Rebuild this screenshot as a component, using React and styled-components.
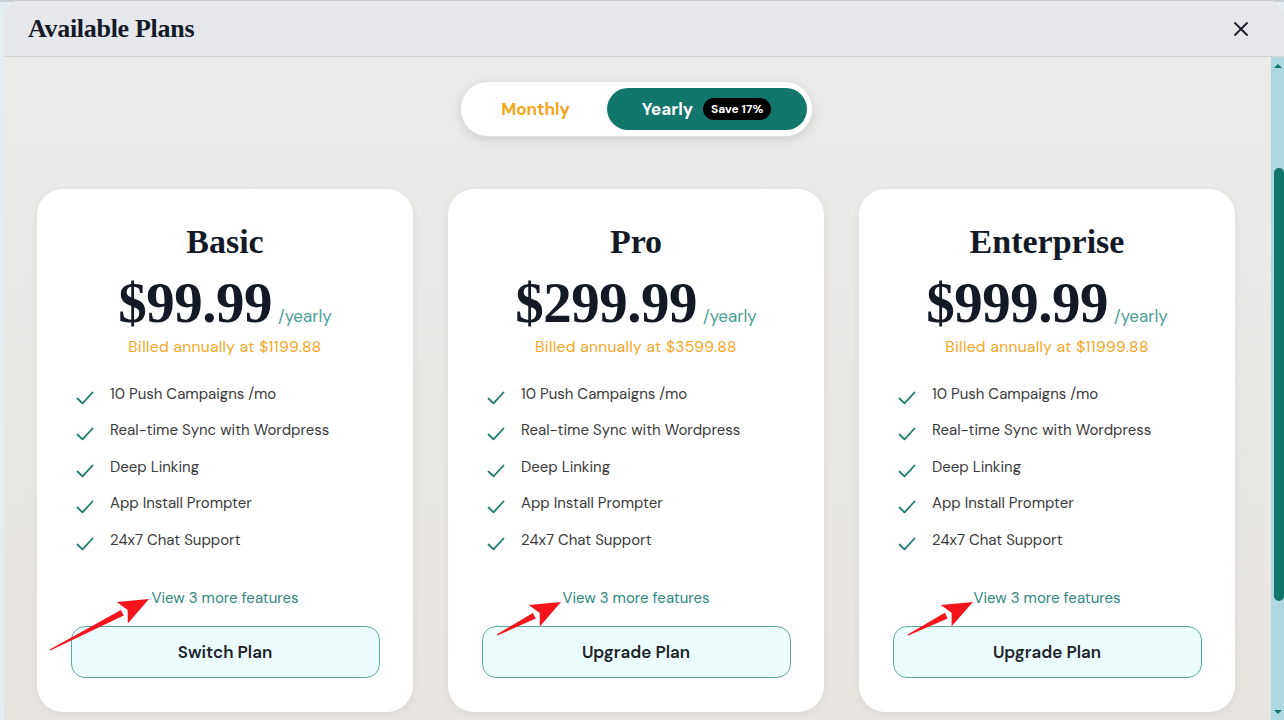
import React from 'react';
import styled, { createGlobalStyle } from 'styled-components';

const GlobalStyle = createGlobalStyle`
  html, body {
    margin: 0;
    padding: 0;
    height: 100%;
    overflow: hidden;
    background: #dfe8ec;
  }
  #root {
    height: 100%;
  }
`;

const Backdrop = styled.div`
  height: 720px;
  padding: 1px 0 0 4px;
  box-sizing: border-box;
  background: linear-gradient(#c9cdd1 0, #c9cdd1 2px, #e4eef2 2px);
`;

const Modal = styled.div`
  height: 719px;
  display: flex;
  flex-direction: column;
  background: #eae9e7;
  border-radius: 14px 14px 0 0;
  overflow: hidden;
`;

const Header = styled.div`
  height: 55px;
  flex: none;
  display: flex;
  align-items: center;
  justify-content: space-between;
  padding: 0 33px 0 24px;
  background: #e6e7eb;
  border-bottom: 1px solid #d3d3d3;
`;

const Title = styled.h2`
  margin: 0;
  font-family: 'Liberation Serif', serif;
  font-weight: 700;
  font-size: 26px;
  letter-spacing: -0.3px;
  color: #141a26;
`;

const CloseButton = styled.button`
  border: 0;
  background: none;
  padding: 0;
  width: 20px;
  height: 20px;
  display: flex;
  align-items: center;
  justify-content: center;
  cursor: pointer;
`;

const Body = styled.div`
  flex: 1;
  min-height: 0;
  display: flex;
  background: linear-gradient(#ebebe9, #e7e4e0);
`;

const ScrollArea = styled.div`
  flex: 1;
  overflow: hidden;
`;

const ScrollRail = styled.div`
  flex: none;
  width: 13px;
  background: #acd7e3;
  display: flex;
  flex-direction: column;
  align-items: center;
  padding: 7px 0 6px;
  box-sizing: border-box;
`;

const RailArrow = styled.span`
  width: 0;
  height: 0;
  border-left: 4px solid transparent;
  border-right: 4px solid transparent;
  ${(p) => (p.$down ? 'border-top: 4px solid #12766b;' : 'border-bottom: 4px solid #12766b;')}
  margin-top: ${(p) => (p.$down ? 'auto' : '0')};
`;

const RailThumb = styled.span`
  margin-top: 100px;
  margin-left: 2px;
  width: 10px;
  height: 433px;
  border-radius: 5px;
  background: #12766b;
`;

const Content = styled.div`
  padding: 24px 36px 40px 33px;
  display: flex;
  flex-direction: column;
  align-items: center;
  font-family: 'DM Sans', Roboto, 'Noto Sans', sans-serif;
`;

const Toggle = styled.div`
  display: flex;
  align-items: center;
  width: 353px;
  height: 56px;
  box-sizing: border-box;
  padding: 6px 5px;
  background: #fff;
  border-radius: 28px;
  border: 1px solid #e2e2e2;
  box-shadow: 0 3px 10px rgba(0, 0, 0, 0.12);
`;

const ToggleOption = styled.button`
  height: 42px;
  border: 0;
  border-radius: 21px;
  display: flex;
  align-items: center;
  justify-content: center;
  gap: 10px;
  font-family: inherit;
  font-size: 17px;
  font-weight: 700;
  cursor: pointer;
  padding: 0;
  width: ${(p) => (p.$active ? '200px' : '140px')};
  background: ${(p) => (p.$active ? '#12766b' : 'transparent')};
  color: ${(p) => (p.$active ? '#fff' : '#f5a51b')};
  margin-left: ${(p) => (p.$active ? 'auto' : '0')};
`;

const SaveBadge = styled.span`
  background: #000;
  color: #fff;
  font-size: 12px;
  font-weight: 700;
  padding: 0 8px;
  height: 22px;
  line-height: 22px;
  border-radius: 11px;
`;

const Cards = styled.div`
  margin-top: 52px;
  display: grid;
  grid-template-columns: repeat(3, 376px);
  gap: 35px;
`;

const Card = styled.div`
  position: relative;
  background: #fff;
  border-radius: 26px;
  box-shadow: 0 2px 8px rgba(0, 0, 0, 0.06);
  padding: 33px 34px 34px;
  display: flex;
  flex-direction: column;
  align-items: center;
`;

const PlanName = styled.h3`
  margin: 0;
  font-family: 'Liberation Serif', serif;
  font-weight: 700;
  font-size: 34px;
  line-height: 40px;
  color: #131a26;
`;

const PriceRow = styled.div`
  display: flex;
  align-items: baseline;
  gap: 6px;
  margin-top: 9px;
`;

const Price = styled.span`
  font-family: 'Liberation Serif', serif;
  font-weight: 700;
  font-size: 57px;
  line-height: 64px;
  letter-spacing: -0.5px;
  color: #131a26;
`;

const Period = styled.span`
  font-size: 17px;
  color: #4a9f95;
`;

const Billed = styled.div`
  margin-top: 2px;
  font-size: 15.5px;
  color: #f5a623;
  letter-spacing: 0.35px;
`;

const FeatureList = styled.ul`
  list-style: none;
  margin: 26px 0 0;
  padding: 0 0 0 5px;
  align-self: stretch;
  display: flex;
  flex-direction: column;
  gap: 15px;
`;

const Feature = styled.li`
  display: flex;
  align-items: center;
  gap: 16px;
  height: 21.5px;
  font-size: 15px;
  color: #3a3a3a;
`;

const MoreLink = styled.a`
  margin-top: 37px;
  font-size: 15px;
  color: #2f887e;
  text-decoration: none;
  cursor: pointer;
`;

const PlanButton = styled.button`
  margin-top: 18px;
  width: 309px;
  height: 52px;
  border-radius: 14px;
  border: 1.5px solid #5fa99f;
  background: #ebfdfd;
  font-family: inherit;
  font-size: 17px;
  font-weight: 600;
  color: #1e232a;
  cursor: pointer;
`;

const ArrowSvg = styled.svg`
  position: absolute;
  left: 0;
  top: 0;
  pointer-events: none;
  overflow: visible;
`;

const Check = () => (
  <svg width="18" height="14" viewBox="0 0 18 14" style={{ marginTop: 8, flex: 'none' }}>
    <path d="M1.5 7.5 L6.5 12.3 L16.5 1.5" fill="none" stroke="#1f7b6f" strokeWidth="1.8" strokeLinecap="round" strokeLinejoin="round" />
  </svg>
);

const CloseIcon = () => (
  <svg width="14" height="14" viewBox="0 0 14 14">
    <path d="M1 1 L13 13 M13 1 L1 13" stroke="#1d2230" strokeWidth="1.9" strokeLinecap="round" />
  </svg>
);

// red annotation arrow, tail -> tip in card coordinates
const Arrow = ({ tail, tip }) => {
  const dx = tip[0] - tail[0];
  const dy = tip[1] - tail[1];
  const len = Math.hypot(dx, dy);
  const ux = dx / len;
  const uy = dy / len;
  const nx = -uy;
  const ny = ux;
  const headLen = 30;
  const base = [tip[0] - ux * headLen, tip[1] - uy * headLen];
  const p = (pt, n, w) => `${pt[0] + nx * w * n},${pt[1] + ny * w * n}`;
  const shaft = [p(tail, 1, 0.6), p(base, 1, 3.2), p(base, -1, 3.2), p(tail, -1, 0.6)].join(' ');
  const head = [`${tip[0]},${tip[1]}`, p(base, 1, 12), p([base[0] + ux * 6, base[1] + uy * 6], 0, 0), p(base, -1, 12)].join(' ');
  return (
    <ArrowSvg width="1" height="1">
      <polygon points={shaft} fill="#f4141c" />
      <polygon points={head} fill="#f4141c" />
    </ArrowSvg>
  );
};

const features = [
  '10 Push Campaigns /mo',
  'Real-time Sync with Wordpress',
  'Deep Linking',
  'App Install Prompter',
  '24x7 Chat Support',
];

const plans = [
  { name: 'Basic', price: '$99.99', billed: '$1199.88', action: 'Switch Plan', tail: [13, 461], tip: [112, 410] },
  { name: 'Pro', price: '$299.99', billed: '$3599.88', action: 'Upgrade Plan', tail: [49, 446], tip: [113, 413] },
  { name: 'Enterprise', price: '$999.99', billed: '$11999.88', action: 'Upgrade Plan', tail: [49, 446], tip: [114, 413] },
];

const App = () => {
  return (
    <>
      <GlobalStyle />
      <Backdrop>
        <Modal>
          <Header>
            <Title>Available Plans</Title>
            <CloseButton aria-label="Close">
              <CloseIcon />
            </CloseButton>
          </Header>
          <Body>
            <ScrollArea>
              <Content>
                <Toggle>
                  <ToggleOption>Monthly</ToggleOption>
                  <ToggleOption $active>
                    Yearly <SaveBadge>Save 17%</SaveBadge>
                  </ToggleOption>
                </Toggle>
                <Cards>
                  {plans.map((plan) => (
                    <Card key={plan.name}>
                      <PlanName>{plan.name}</PlanName>
                      <PriceRow>
                        <Price>{plan.price}</Price>
                        <Period>/yearly</Period>
                      </PriceRow>
                      <Billed>Billed annually at {plan.billed}</Billed>
                      <FeatureList>
                        {features.map((f) => (
                          <Feature key={f}>
                            <Check />
                            {f}
                          </Feature>
                        ))}
                      </FeatureList>
                      <MoreLink>View 3 more features</MoreLink>
                      <PlanButton>{plan.action}</PlanButton>
                      <Arrow tail={plan.tail} tip={plan.tip} />
                    </Card>
                  ))}
                </Cards>
              </Content>
            </ScrollArea>
            <ScrollRail>
              <RailArrow />
              <RailThumb />
              <RailArrow $down />
            </ScrollRail>
          </Body>
        </Modal>
      </Backdrop>
    </>
  );
};

export default App;
